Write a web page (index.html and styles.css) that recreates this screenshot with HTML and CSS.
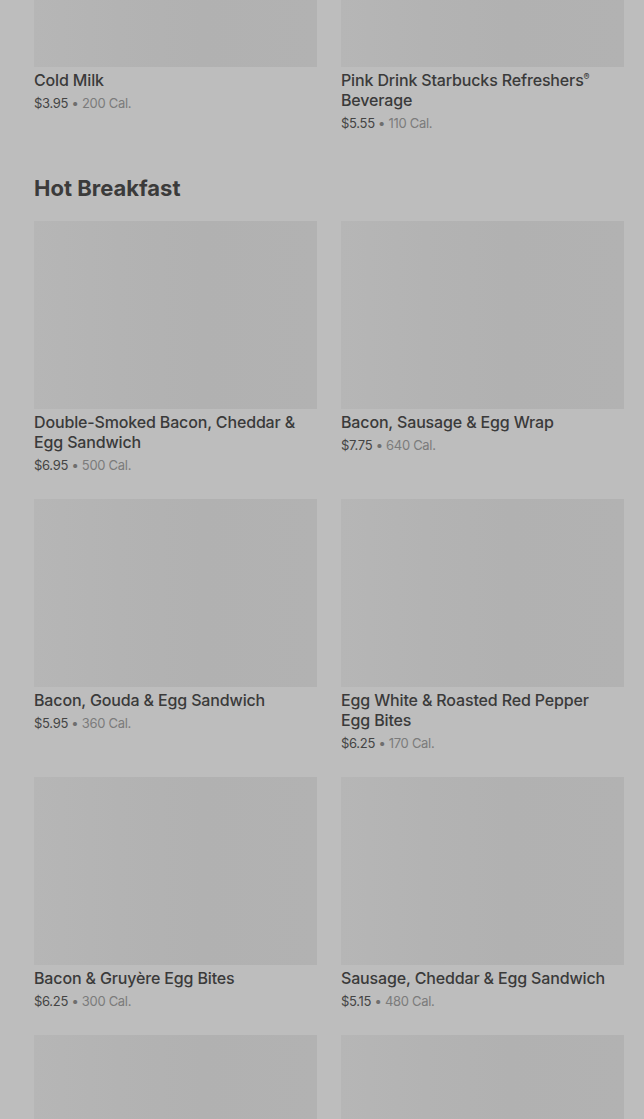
FILE: index.html
```html
<!DOCTYPE html>
<html lang="en">
<head>
  <meta charset="UTF-8">
  <title>Menu</title>
  <meta name="viewport" content="width=device-width, initial-scale=1.0">
  <link rel="stylesheet" href="styles.css">
</head>
<body>
  <div class="menu">
    <!-- previous section, scrolled past -->
    <section class="category">
      <div class="grid">
        <div class="item">
          <div class="thumb cut"></div>
          <div class="name">Cold Milk</div>
          <div class="meta"><span class="price">$3.95</span> • <span class="cal">200 Cal.</span></div>
        </div>
        <div class="item">
          <div class="thumb cut"></div>
          <div class="name">Pink Drink Starbucks Refreshers<sup>®</sup> Beverage</div>
          <div class="meta"><span class="price">$5.55</span> • <span class="cal">110 Cal.</span></div>
        </div>
      </div>
    </section>

    <section class="category">
      <h2>Hot Breakfast</h2>
      <div class="grid">
        <div class="item">
          <div class="thumb"></div>
          <div class="name">Double-Smoked Bacon, Cheddar &amp; Egg Sandwich</div>
          <div class="meta"><span class="price">$6.95</span> • <span class="cal">500 Cal.</span></div>
        </div>
        <div class="item">
          <div class="thumb"></div>
          <div class="name">Bacon, Sausage &amp; Egg Wrap</div>
          <div class="meta"><span class="price">$7.75</span> • <span class="cal">640 Cal.</span></div>
        </div>
        <div class="item">
          <div class="thumb"></div>
          <div class="name">Bacon, Gouda &amp; Egg Sandwich</div>
          <div class="meta"><span class="price">$5.95</span> • <span class="cal">360 Cal.</span></div>
        </div>
        <div class="item">
          <div class="thumb"></div>
          <div class="name">Egg White &amp; Roasted Red Pepper Egg Bites</div>
          <div class="meta"><span class="price">$6.25</span> • <span class="cal">170 Cal.</span></div>
        </div>
        <div class="item">
          <div class="thumb"></div>
          <div class="name">Bacon &amp; Gruyère Egg Bites</div>
          <div class="meta"><span class="price">$6.25</span> • <span class="cal">300 Cal.</span></div>
        </div>
        <div class="item">
          <div class="thumb"></div>
          <div class="name">Sausage, Cheddar &amp; Egg Sandwich</div>
          <div class="meta"><span class="price">$5.15</span> • <span class="cal">480 Cal.</span></div>
        </div>
        <div class="item">
          <div class="thumb"></div>
        </div>
        <div class="item">
          <div class="thumb"></div>
        </div>
      </div>
    </section>
  </div>
</body>
</html>
```

FILE: styles.css
```css
body {
  margin: 0;
  padding: 0;
  background: #bdbdbd;
  font-family: 'Inter', 'Roboto', sans-serif;
  color: #3a3a3a;
}

.menu {
  padding: 0 20px 0 34px;
}

.category h2 {
  font-size: 22px;
  line-height: 28px;
  font-weight: 700;
  color: #3b3b3b;
  margin: 41px 0 19px;
}

.grid {
  display: grid;
  grid-template-columns: 1fr 1fr;
  column-gap: 24px;
  row-gap: 24px;
}

.thumb {
  height: 188px;
  background: linear-gradient(90deg, #b6b6b6 0%, #b3b3b3 30%, #b1b1b1 60%, #b2b2b2 100%);
}

.thumb.cut {
  height: 67px;
}

.name {
  margin-top: 3px;
  padding-right: 10px;
  font-size: 16px;
  line-height: 20px;
  font-weight: 500;
  letter-spacing: -0.15px;
  color: #3a3a3a;
}

.name sup {
  font-size: 9px;
  line-height: 0;
}

.meta {
  margin-top: 4px;
  font-size: 13px;
  line-height: 19px;
  letter-spacing: -0.3px;
  color: #6e6e6e;
}

.price {
  color: #444;
}

.cal {
  color: #7b7b7b;
}
```
